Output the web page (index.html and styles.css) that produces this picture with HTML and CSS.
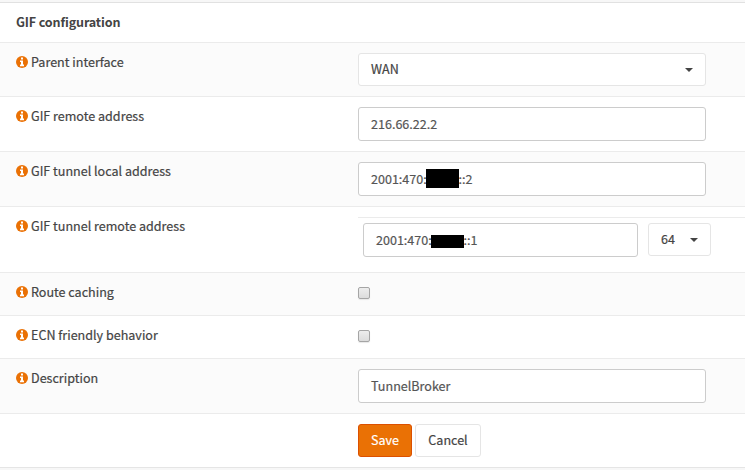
FILE: index.html
```html
<!DOCTYPE html>
<html lang="en">
<head>
<meta charset="utf-8">
<title>GIF configuration</title>
<link rel="stylesheet" href="styles.css">
</head>
<body>
<svg class="defs" width="0" height="0"><symbol id="info" viewBox="0 0 12 12"><circle cx="6" cy="6" r="6" fill="currentColor"/><path fill="#fff" d="M5 1.4h2v2H5zM4 4.6h3v4h1v1.6H4V8.600h1V6H4z"/></symbol></svg>
<form class="panel">
  <div class="row header"><strong>GIF configuration</strong></div>
  <div class="row odd h54"><div class="label"><svg class="icon"><use href="#info"/></svg><span>Parent interface</span></div>
    <div class="cell"><div class="select wide"><span>WAN</span><i class="caret"></i></div></div></div>
  <div class="row h55"><div class="label"><svg class="icon"><use href="#info"/></svg><span>GIF remote address</span></div>
    <div class="cell"><div class="input">216.66.22.2</div></div></div>
  <div class="row odd h55"><div class="label"><svg class="icon"><use href="#info"/></svg><span>GIF tunnel local address</span></div>
    <div class="cell"><div class="input"><span class="prefix">2001:470:</span><i class="redact tall"></i><span>::2</span></div></div></div>
  <div class="row h66"><div class="label"><svg class="icon"><use href="#info"/></svg><span>GIF tunnel remote address</span></div>
    <div class="cell"><div class="pair"><div class="input"><span class="prefix">2001:470:</span><i class="redact"></i><span>::1</span></div><div class="select small"><span>64</span><i class="caret"></i></div></div></div></div>
  <div class="row odd h43"><div class="label"><svg class="icon"><use href="#info"/></svg><span>Route caching</span></div>
    <div class="cell"><i class="check"></i></div></div>
  <div class="row h43"><div class="label"><svg class="icon"><use href="#info"/></svg><span>ECN friendly behavior</span></div>
    <div class="cell"><i class="check"></i></div></div>
  <div class="row odd h55"><div class="label"><svg class="icon"><use href="#info"/></svg><span>Description</span></div>
    <div class="cell"><div class="input">TunnelBroker</div></div></div>
  <div class="row h54"><div class="label"></div>
    <div class="cell buttons"><div class="btn save">Save</div><div class="btn cancel">Cancel</div></div></div>
</form>
</body>
</html>
```
FILE: styles.css
```css
* { box-sizing: border-box; }
body { margin: 0; padding-top: 2px; height: 470px; overflow: hidden; background: #f7f7f7; color: #444; font: 400 12.55px/18px "Noto Sans CJK JP", sans-serif; -webkit-text-stroke: 0.2px; }
.defs { display: none; }
.panel { background: #fff; border-bottom: 1px solid #e5e5e5; }
.row { display: flex; border-top: 1px solid #ebebeb; padding-top: 10px; }
.header { height: 40px; padding-left: 16px; border-top-color: #e1e1e1; letter-spacing: -0.14px; -webkit-text-stroke: 0; }
.odd { background: #fbfbfb; }
.h43 { height: 43px; }
.h54 { height: 54px; }
.h55 { height: 55px; }
.h66 { height: 66px; }
.label { display: flex; width: 358px; height: 20px; padding-left: 16px; gap: 3px; }
.icon { width: 12px; height: 12px; margin-top: 3px; color: #ea7105; }
.cell { flex: 1; }
.input { display: flex; width: 348px; height: 34px; padding: 7px 12px 5px; border: 1px solid #ccc; border-radius: 3px; background: #fff; color: #555; }
.select { display: flex; align-items: center; justify-content: space-between; height: 33px; padding: 0 12px; border: 1px solid #e5e5e5; border-radius: 3px; background: #fff; }
.select span { margin-bottom: 2px; }
.wide { width: 348px; }
.small { width: 63px; }
.caret { width: 8px; height: 4px; margin-top: 1px; background: #444; clip-path: polygon(0 0, 100% 0, 50% 100%); }
.pair { display: flex; gap: 10px; padding: 5px 0 0 5px; border-top: 1px solid #ebebeb; }
.pair .input { width: 275px; }
.prefix { width: 55px; }
.redact { position: relative; width: 33px; height: 13px; margin-top: 4px; background: #000; }
.redact + span { margin-left: -0.4px; }
.tall { height: 19px; margin-top: -1px; }
.check { display: block; width: 12px; height: 12px; margin-top: 4px; border: 1px solid #a5a5a5; border-radius: 2px; background: linear-gradient(#ededed, #dcdcdc); box-shadow: 0 1px 1px #e8e8e8; }
.buttons { display: flex; gap: 3px; }
.btn { height: 33px; padding-top: 6px; border: 1px solid #e5e5e5; border-radius: 3px; text-align: center; }
.save { width: 54px; color: #fff; background: #ea7105; border-color: #dc5000; }
.cancel { width: 66px; background: #fff; }
```
